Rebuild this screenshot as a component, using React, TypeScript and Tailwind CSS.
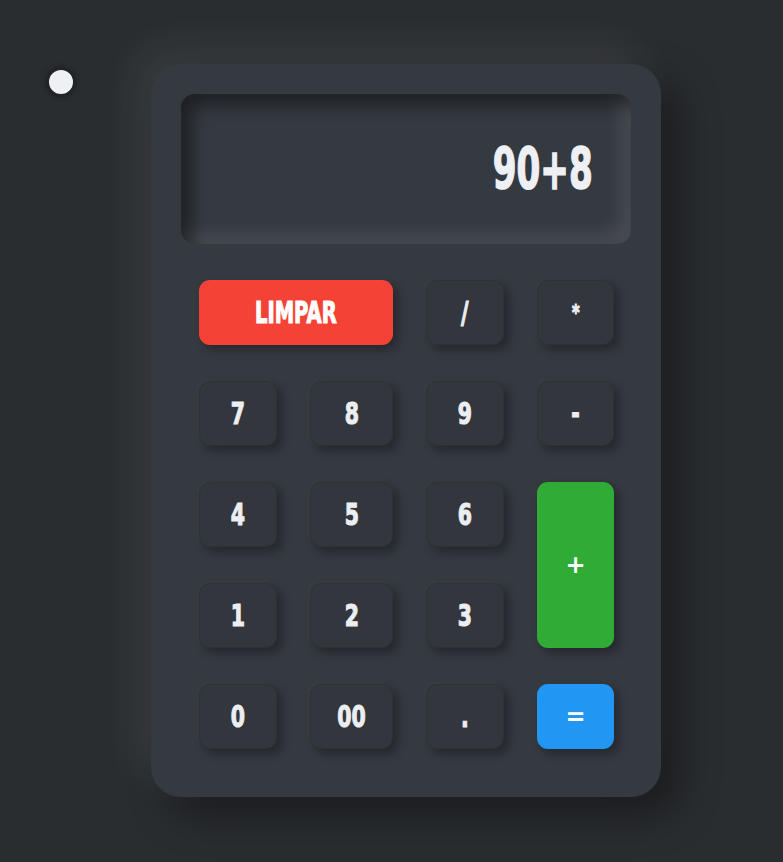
import React from "react";

const font = { fontFamily: '"DejaVu Sans", "Liberation Sans", sans-serif' };

function Key({ label, className = "", small = false }: { label: string; className?: string; small?: boolean }) {
  return (
    <div
      className={`flex items-center justify-center rounded-[11px] border border-[#2e3136] bg-[#33363c] text-[#eceef1] font-bold shadow-[5px_5px_10px_rgba(0,0,0,0.3),-2px_-2px_6px_rgba(255,255,255,0.025)] ${className}`}
      style={font}
    >
      <span
        className={`inline-block leading-none scale-x-[0.66] [-webkit-text-stroke:1.2px_#eceef1] ${small ? "text-[22px]" : "text-[31px]"}`}
      >
        {label}
      </span>
    </div>
  );
}

export default function App() {
  return (
    <div className="relative min-h-screen w-full bg-[#2a2d30] pl-[151px] pt-[64px] pb-[65px]">
      <div className="absolute left-[47px] top-[68px] h-[28px] w-[28px] rounded-full border-[2px] border-[#222529] bg-[#eef0f4] shadow-[0_0_6px_rgba(0,0,0,0.45)]" />
      <div className="flex h-[733px] w-[510px] flex-col rounded-[30px] bg-[#353940] p-[30px] shadow-[-16px_-18px_40px_rgba(255,255,255,0.075),18px_18px_40px_rgba(0,0,0,0.4)]">
        <div className="flex h-[150px] items-center justify-end rounded-[14px] bg-[#353940] pr-[38px] shadow-[inset_10px_10px_17px_rgba(0,0,0,0.45),inset_-10px_-10px_17px_rgba(255,255,255,0.1)]">
          <span
            className="inline-block origin-right scale-x-[0.6] text-[57px] font-bold leading-none text-[#eef0f4] [-webkit-text-stroke:1.6px_#eef0f4]"
            style={font}
          >
            90+8
          </span>
        </div>
        <div className="mx-[18px] mt-[36px] grid grid-cols-[78px_83px_78px_77px] grid-rows-[repeat(5,65px)] gap-x-[33px] gap-y-[36px]">
          <div
            className="col-span-2 flex items-center justify-center rounded-[11px] bg-[#f44336] font-bold text-white shadow-[5px_5px_10px_rgba(0,0,0,0.3)]"
            style={font}
          >
            <span className="inline-block scale-x-[0.65] text-[30px] leading-none [-webkit-text-stroke:1.2px_white]">LIMPAR</span>
          </div>
          <Key label="/" />
          <Key label="*" small />
          <Key label="7" />
          <Key label="8" />
          <Key label="9" />
          <Key label="-" />
          <Key label="4" />
          <Key label="5" />
          <Key label="6" />
          <div
            className="row-span-2 flex items-center justify-center rounded-[11px] bg-[#30ab36] text-[24px] font-bold text-white shadow-[5px_5px_10px_rgba(0,0,0,0.3)]"
            style={font}
          >
            +
          </div>
          <Key label="1" />
          <Key label="2" />
          <Key label="3" />
          <Key label="0" />
          <Key label="00" />
          <Key label="." />
          <div
            className="flex items-center justify-center rounded-[11px] bg-[#2196f3] text-[24px] font-bold text-white shadow-[5px_5px_10px_rgba(0,0,0,0.3)]"
            style={font}
          >
            =
          </div>
        </div>
      </div>
    </div>
  );
}
